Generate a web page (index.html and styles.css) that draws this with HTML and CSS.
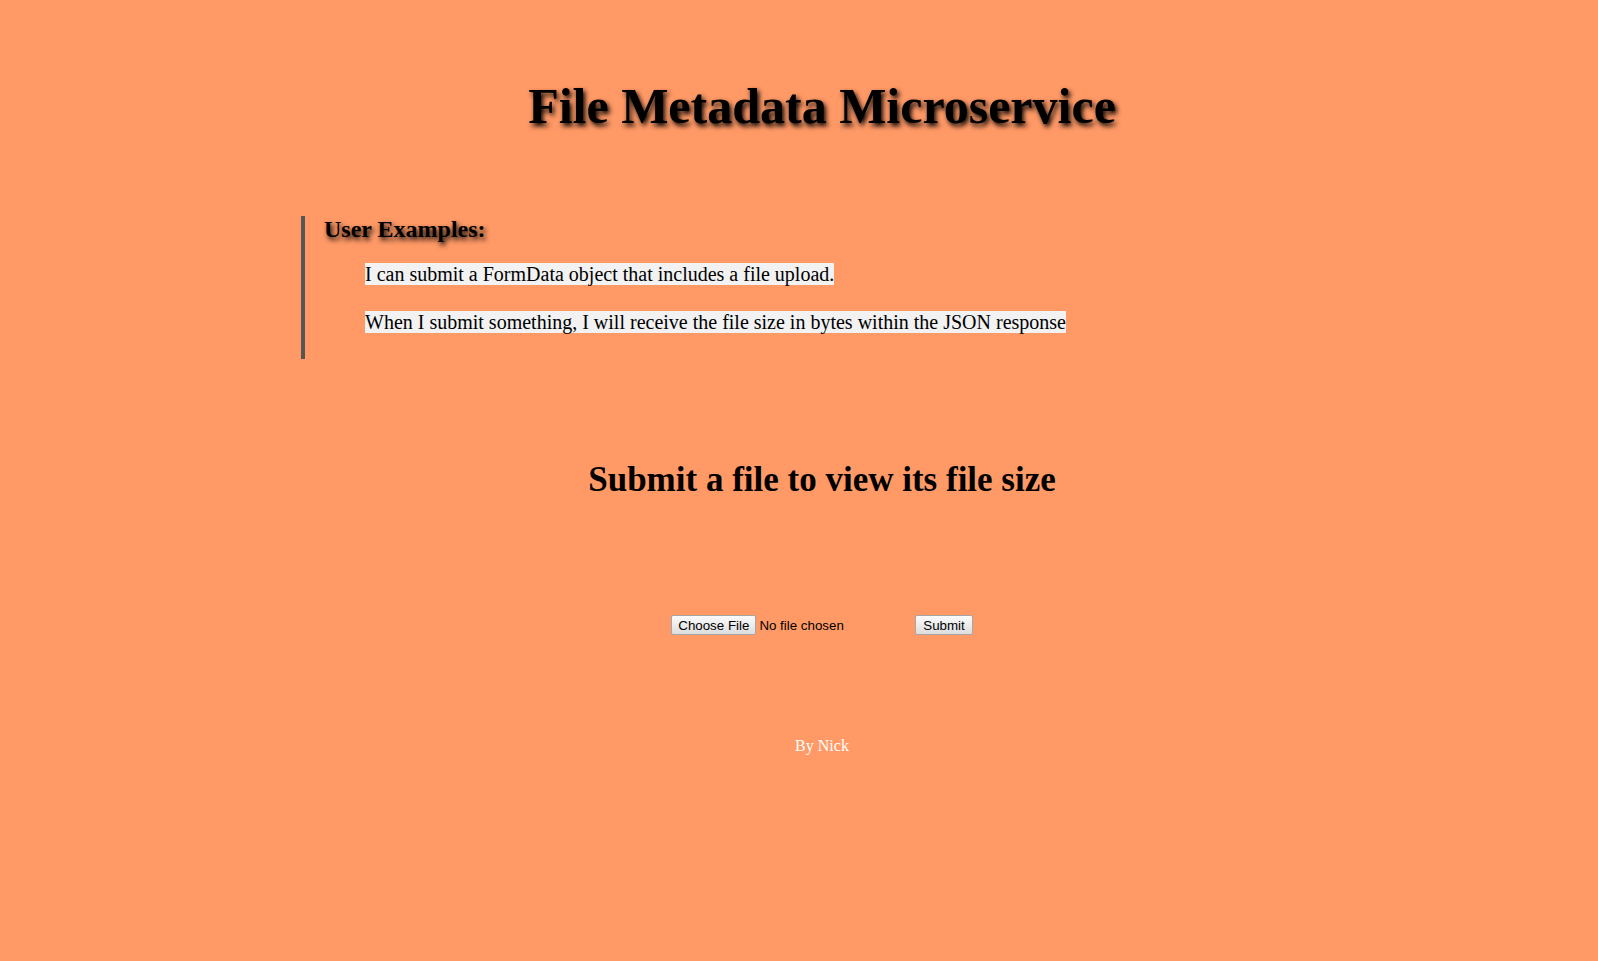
FILE: index.html
```html
<!DOCTYPE html>
<html lang="en">
<head>
<meta charset="utf-8">
<title>File Metadata Microservice</title>
<link rel="stylesheet" href="styles.css">
</head>
<body>
<div class="page">
  <h1 class="title">File Metadata Microservice</h1>
  <blockquote class="examples">
    <h2 class="examples-head">User Examples:</h2>
    <ul class="examples-list">
      <li class="example"><span class="hl">I can submit a FormData object that includes a file upload.</span></li>
      <li class="example"><span class="hl">When I submit something, I will receive the file size in bytes within the JSON response</span></li>
    </ul>
  </blockquote>
  <h2 class="subtitle">Submit a file to view its file size</h2>
  <form class="upload" action="#" method="post" enctype="multipart/form-data">
    <input class="file" type="file" name="upfile">
    <input class="submit" type="submit" value="Submit">
  </form>
  <p class="footer">By Nick</p>
</div>
</body>
</html>
```
FILE: styles.css
```css
html, body {
  margin: 0;
  padding: 0;
}
body {
  background: #ff9966;
  font-family: "Liberation Serif", "Times New Roman", serif;
  color: #000;
  min-height: 961px;
}
.page {
  padding-left: 46px;
  display: flow-root;
}
.title {
  margin: 77px 0 81px;
  font-size: 50px;
  line-height: 58px;
  font-weight: bold;
  text-align: center;
  text-shadow: 2px 3px 5px #000;
}
.examples {
  margin: 0 0 0 255px;
  padding: 0 0 25px 19px;
  border-left: 4px solid #555;
}
.examples-head {
  margin: 0 0 21px;
  font-size: 24px;
  line-height: 26px;
  font-weight: bold;
  text-shadow: 2px 3px 5px #000;
}
.examples-list {
  list-style: none;
  margin: 0;
  padding: 0 0 0 41px;
  display: flex;
  flex-direction: column;
  gap: 25px;
}
.example {
  font-size: 20px;
  line-height: 23px;
}
.hl {
  background: #f2f2f2;
}
.subtitle {
  margin: 101px 0 0;
  font-size: 35px;
  line-height: 40px;
  font-weight: bold;
  text-align: center;
}
.upload {
  margin: 115px 0 0;
  text-align: center;
  line-height: 21px;
}
.file, .submit {
  font: 13.333px "Liberation Sans", Arial, sans-serif;
  color: #000;
  vertical-align: top;
}
.file {
  width: 240px;
  height: 20px;
  text-align: left;
}
.file::file-selector-button,
.submit {
  box-sizing: border-box;
  height: 20px;
  padding: 0 6px;
  border: 1px solid #a6a6a6;
  border-radius: 2px;
  background: linear-gradient(#fbfbfb, #dddddd);
  font: 13.333px "Liberation Sans", Arial, sans-serif;
  color: #000;
}
.submit {
  padding: 0 7px;
}
.file::file-selector-button {
  margin: 0 3px 0 0;
}
.footer {
  margin: 101px 0 0;
  font-size: 16px;
  line-height: 18px;
  color: #fff;
  text-align: center;
}
```
